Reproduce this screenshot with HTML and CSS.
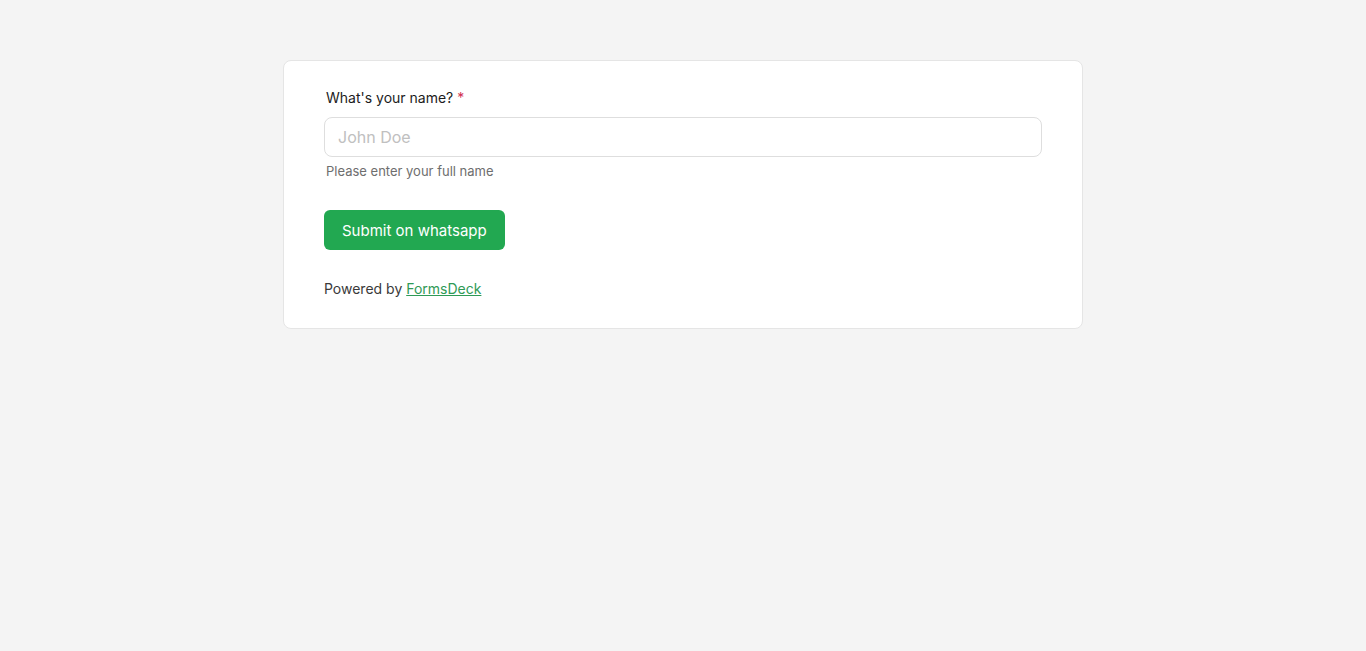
FILE: index.html
```html
<!DOCTYPE html>
<html>
<head>
    <link rel="stylesheet" href="styles.css">
</head>
<body>

<div class="container">
    <form class="form-card">
        <div class="form-group">
            <label for="fullName">What's your name? <span class="required">*</span></label>
            <input type="text" id="fullName" placeholder="John Doe">
            <div class="hint">Please enter your full name</div>
        </div>
        <button type="button" class="submit">Submit on whatsapp</button>
        <p class="powered">Powered by <a href="#">FormsDeck</a></p>
    </form>
</div>

</body>
</html>
```

FILE: styles.css
```css
/* General Styling */
body {
    font-family: Inter, "Noto Sans", sans-serif;
    margin: 0;
    padding: 0;
    background-color: #f4f4f4;
}

.container {
    width: 800px;
    margin: 60px auto 0;
}

.form-card {
    background: #fff;
    border: 1px solid #e5e5e5;
    border-radius: 8px;
    padding: 27px 40px 29px;
}

.form-group label {
    display: block;
    font-size: 14px;
    line-height: 20px;
    color: #1c1c1c;
    margin-left: 2px;
}

.form-group .required {
    color: #d0304f;
}

.form-group input {
    display: block;
    box-sizing: border-box;
    width: 100%;
    height: 40px;
    margin-top: 9px;
    padding: 0 13px;
    border: 1px solid #dedede;
    border-radius: 8px;
    font-family: inherit;
    font-size: 16px;
    color: #222;
    outline: none;
}

.form-group input::placeholder {
    color: #c0c0c0;
}

.hint {
    font-size: 13px;
    line-height: 18px;
    color: #6e6e6e;
    margin: 5px 0 0 2px;
}

button.submit {
    display: block;
    margin-top: 30px;
    height: 40px;
    padding: 0 18px;
    border: none;
    border-radius: 6px;
    background-color: #22a851;
    color: #fff;
    font-family: inherit;
    font-size: 15px;
    cursor: pointer;
}

.powered {
    margin: 29px 0 0;
    font-size: 14px;
    line-height: 20px;
    color: #3a3a3a;
}

.powered a {
    color: #2f9a56;
}
```
